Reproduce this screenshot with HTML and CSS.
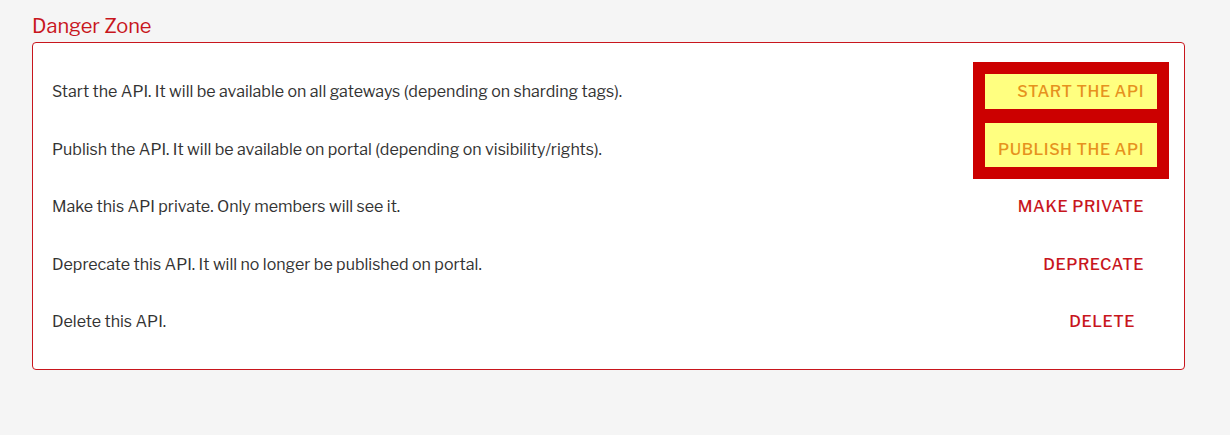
FILE: index.html
```html
<!DOCTYPE html>
<html lang="en">
<head>
<meta charset="utf-8">
<title>Danger Zone</title>
<link rel="stylesheet" href="styles.css">
</head>
<body>
<div class="page">
  <h2 class="zone-title">Danger Zone</h2>
  <div class="zone-card">
    <div class="zone-row">
      <span class="zone-text">Start the API. It will be available on all gateways (depending on sharding tags).</span>
      <button class="zone-btn zone-btn--hl">START THE API</button>
    </div>
    <div class="zone-row">
      <span class="zone-text">Publish the API. It will be available on portal (depending on visibility/rights).</span>
      <button class="zone-btn zone-btn--hl zone-btn--tall">PUBLISH THE API</button>
    </div>
    <div class="zone-row">
      <span class="zone-text">Make this API private. Only members will see it.</span>
      <button class="zone-btn">MAKE PRIVATE</button>
    </div>
    <div class="zone-row">
      <span class="zone-text">Deprecate this API. It will no longer be published on portal.</span>
      <button class="zone-btn">DEPRECATE</button>
    </div>
    <div class="zone-row">
      <span class="zone-text">Delete this API.</span>
      <button class="zone-btn zone-btn--delete">DELETE</button>
    </div>
  </div>
</div>
</body>
</html>
```

FILE: styles.css
```css
html, body {
  margin: 0;
  padding: 0;
  background: #f5f5f5;
}

body {
  font-family: "Libre Franklin", Roboto, "Liberation Sans", sans-serif;
  color: #333333;
}

.page {
  padding: 12px 45px 0 32px;
}

.zone-title {
  margin: 0;
  font-size: 20px;
  font-weight: 400;
  line-height: 28px;
  color: #c8161d;
  height: 30px;
}

.zone-card {
  background: #ffffff;
  border: 1px solid #c8161d;
  border-radius: 4px;
  padding: 20px 27px 18px 19px;
}

.zone-row {
  display: flex;
  align-items: center;
  justify-content: space-between;
  height: 57.5px;
}

.zone-text {
  font-size: 16px;
  color: #333333;
}

.zone-btn {
  font-family: inherit;
  font-size: 16px;
  font-weight: 500;
  letter-spacing: 0.55px;
  color: #c8161d;
  background: transparent;
  border: none;
  height: 36px;
  width: 172px;
  padding: 0 13px 0 0;
  text-align: right;
  cursor: pointer;
}

.zone-btn--hl {
  background: #ffff80;
  color: #e6921e;
  outline: 12px solid #cc0000;
  height: 35px;
}

.zone-btn--tall {
  height: 44px;
  padding-top: 8px;
  margin-top: -8px;
}

.zone-btn--delete {
  padding-right: 22px;
}
```
